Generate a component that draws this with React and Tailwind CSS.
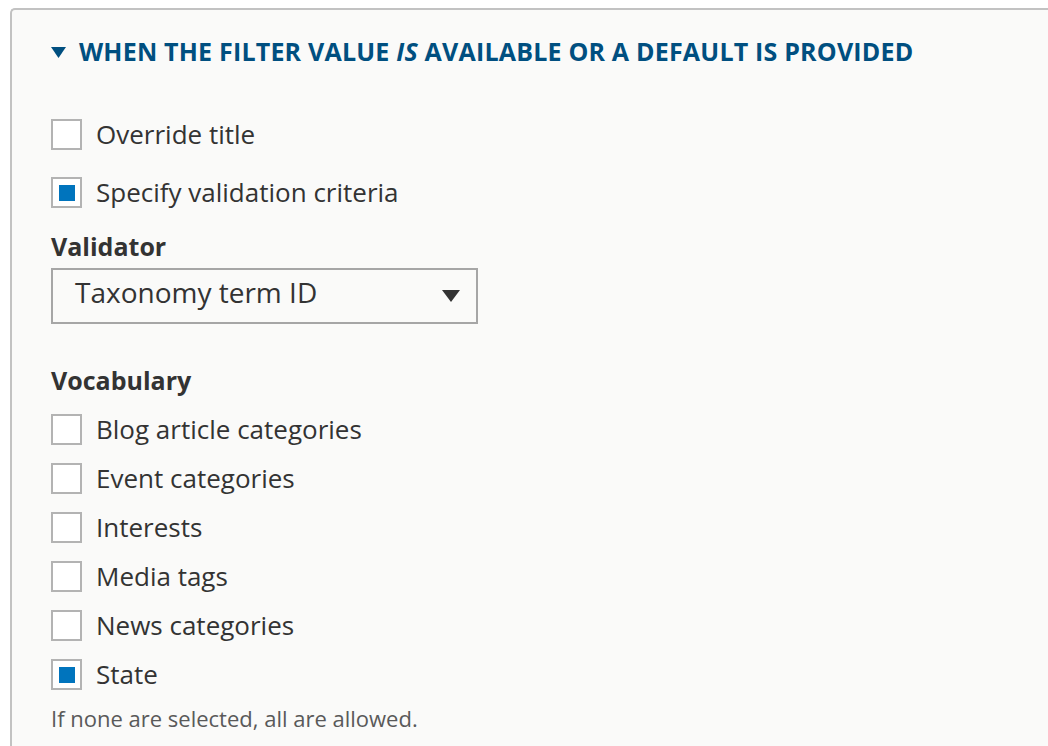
import React from 'react';

const Checkbox = ({ checked, label }) => (
  <label className="flex items-center h-[31px]">
    <span className="w-[31px] h-[31px] border-2 border-[#b3b3b3] bg-white flex items-center justify-center shrink-0">
      {checked && <span className="w-[16px] h-[16px] bg-[#0074bd]" />}
    </span>
    <span className="ml-[14px] text-[26px] text-[#333]">{label}</span>
  </label>
);

const vocabularies = [
  { label: 'Blog article categories', checked: false },
  { label: 'Event categories', checked: false },
  { label: 'Interests', checked: false },
  { label: 'Media tags', checked: false },
  { label: 'News categories', checked: false },
  { label: 'State', checked: true },
];

export default function App() {
  return (
    <div className="bg-white w-[1048px] h-[746px] overflow-hidden pt-[8px] pl-[10px]" style={{ fontFamily: '"Open Sans", sans-serif' }}>
      <div className="w-[1100px] h-[800px] border-l-2 border-t-2 border-[#c2c2c2] rounded-tl-[5px] bg-[#fafaf9] pl-[39px]">
        <div className="mt-[27px] h-[30px] flex items-center">
          <svg width="15" height="11" viewBox="0 0 15 11" className="shrink-0">
            <polygon points="0,0 15,0 7.5,11" fill="#004f80" />
          </svg>
          <h2 className="ml-[13px] text-[25px] font-bold uppercase text-[#004f80] tracking-[0.2px]">
            When the filter value <em>is</em> available or a default is provided
          </h2>
        </div>

        <div className="mt-[52px]">
          <Checkbox label="Override title" checked={false} />
        </div>
        <div className="mt-[27px]">
          <Checkbox label="Specify validation criteria" checked />
        </div>

        <div className="mt-[24px] h-[30px] flex items-center text-[25px] font-bold text-[#333]">Validator</div>
        <div className="mt-[6px] w-[427px] h-[56px] border-2 border-[#a6a6a6] bg-[#fafaf9] flex items-center justify-between pl-[22px] pr-[16px]">
          <span className="text-[28px] text-[#333] -mt-[9px]">Taxonomy term ID</span>
          <svg width="18" height="12" viewBox="0 0 18 12">
            <polygon points="0,0 18,0 9,12" fill="#333" />
          </svg>
        </div>

        <div className="mt-[42px] h-[30px] flex items-center text-[25px] font-bold text-[#333]">Vocabulary</div>
        <div className="mt-[18px] flex flex-col gap-[18px]">
          {vocabularies.map((v) => (
            <Checkbox key={v.label} label={v.label} checked={v.checked} />
          ))}
        </div>
        <p className="mt-[12px] text-[22px] text-[#595959]">If none are selected, all are allowed.</p>
      </div>
    </div>
  );
}
